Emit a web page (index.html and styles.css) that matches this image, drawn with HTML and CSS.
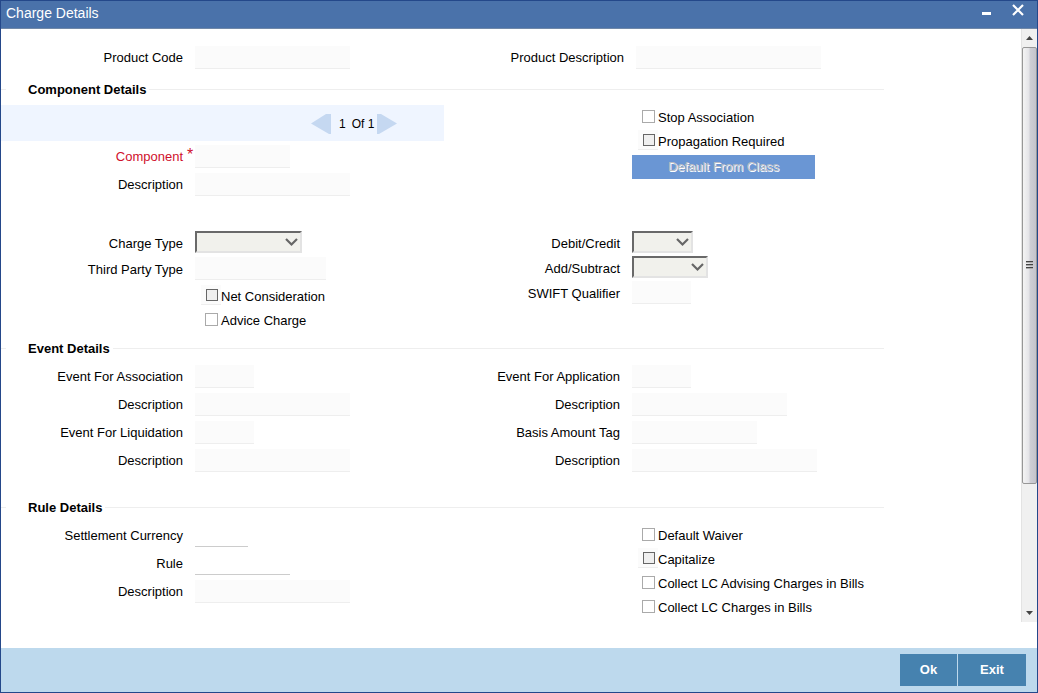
FILE: index.html
```
<!DOCTYPE html>
<html lang="en">
<head>
    <meta charset="UTF-8">
    <meta name="viewport" content="width=device-width, initial-scale=1.0">
    <title>Charge Details</title>
    <link rel="stylesheet" href="styles.css">
</head>
<body>
    <div class="window">
        <header class="titlebar">
            <h1>Charge Details</h1>
            <div class="window-controls">
                <button type="button" aria-label="Minimize">
                    <svg width="12" height="12" viewBox="0 0 12 12"><path d="M1 8h9v3H1z" fill="#fff"/></svg>
                </button>
                <button type="button" aria-label="Close">
                    <svg width="12" height="12" viewBox="0 0 12 12"><path d="M1 1l10 10M11 1L1 11" stroke="#fff" stroke-width="2.2"/></svg>
                </button>
            </div>
        </header>

        <main class="content">
            <form class="form" id="chargeForm">
                <div class="columns product">
                    <div class="column">
                        <div class="row"><label for="productCode">Product Code</label><input type="text" id="productCode" class="w-lg" disabled></div>
                    </div>
                    <div class="column">
                        <div class="row"><label for="productDesc">Product Description</label><input type="text" id="productDesc" class="w-xl" disabled></div>
                    </div>
                </div>

                <section>
                    <h2>Component Details</h2>
                    <div class="columns">
                        <div class="column">
                            <div class="record-nav">
                                <button type="button" aria-label="Previous">
                                    <svg width="20" height="20" viewBox="0 0 20 20"><path d="M0 9.500L15 0h5v20h-2z" fill="#c5d8f1"/></svg>
                                </button>
                                <span class="record-count"><span>1</span><span>Of 1</span></span>
                                <button type="button" aria-label="Next">
                                    <svg width="20" height="20" viewBox="0 0 20 20"><path d="M20 9.500L4 0H0v20h2z" fill="#c5d8f1"/></svg>
                                </button>
                            </div>
                            <div class="fields">
                                <div class="row required"><label for="component">Component <b>*</b></label><input type="text" id="component" class="w-md" disabled></div>
                                <div class="row"><label for="componentDesc">Description</label><input type="text" id="componentDesc" class="w-lg" disabled></div>
                            </div>
                        </div>
                        <div class="column">
                            <div class="check"><span class="tick"><input type="checkbox" id="stopAssoc"></span><label for="stopAssoc">Stop Association</label></div>
                            <div class="check"><span class="tick off"><input type="checkbox" id="propagation" disabled></span><label for="propagation">Propagation Required</label></div>
                            <button type="button" class="default-btn" disabled>Default From Class</button>
                        </div>
                    </div>
                    <div class="columns charge">
                        <div class="column">
                            <div class="row"><label for="chargeType">Charge Type</label><span class="select w-type"><select id="chargeType" disabled><option></option></select><svg width="13" height="9" viewBox="0 0 13 9"><path d="M1 1l5.500 5.500L12 1" fill="none" stroke="#666" stroke-width="2.200"/></svg></span></div>
                            <div class="row"><label for="thirdParty">Third Party Type</label><input type="text" id="thirdParty" class="w-third" disabled></div>
                            <div>
                                <div class="check"><span class="tick off"><input type="checkbox" id="netCons" disabled></span><label for="netCons">Net Consideration</label></div>
                                <div class="check"><span class="tick"><input type="checkbox" id="advice"></span><label for="advice">Advice Charge</label></div>
                            </div>
                        </div>
                        <div class="column">
                            <div class="row"><label for="debitCredit">Debit/Credit</label><span class="select w-debit"><select id="debitCredit" disabled><option></option></select><svg width="13" height="9" viewBox="0 0 13 9"><path d="M1 1l5.500 5.500L12 1" fill="none" stroke="#666" stroke-width="2.200"/></svg></span></div>
                            <div class="row"><label for="addSubtract">Add/Subtract</label><span class="select w-add"><select id="addSubtract" disabled><option></option></select><svg width="13" height="9" viewBox="0 0 13 9"><path d="M1 1l5.500 5.500L12 1" fill="none" stroke="#666" stroke-width="2.200"/></svg></span></div>
                            <div class="row"><label for="swift">SWIFT Qualifier</label><input type="text" id="swift" class="w-sm" disabled></div>
                        </div>
                    </div>
                </section>

                <section class="event">
                    <h2>Event Details</h2>
                    <div class="columns">
                        <div class="column fields">
                            <div class="row"><label for="eventAssoc">Event For Association</label><input type="text" id="eventAssoc" class="w-sm" disabled></div>
                            <div class="row"><label for="eventAssocDesc">Description</label><input type="text" id="eventAssocDesc" class="w-lg" disabled></div>
                            <div class="row"><label for="eventLiq">Event For Liquidation</label><input type="text" id="eventLiq" class="w-sm" disabled></div>
                            <div class="row"><label for="eventLiqDesc">Description</label><input type="text" id="eventLiqDesc" class="w-lg" disabled></div>
                        </div>
                        <div class="column fields">
                            <div class="row"><label for="eventApp">Event For Application</label><input type="text" id="eventApp" class="w-sm" disabled></div>
                            <div class="row"><label for="eventAppDesc">Description</label><input type="text" id="eventAppDesc" class="w-lg" disabled></div>
                            <div class="row"><label for="basisTag">Basis Amount Tag</label><input type="text" id="basisTag" class="w-basis" disabled></div>
                            <div class="row"><label for="basisDesc">Description</label><input type="text" id="basisDesc" class="w-xl" disabled></div>
                        </div>
                    </div>
                </section>

                <section class="rule">
                    <h2>Rule Details</h2>
                    <div class="columns">
                        <div class="column fields">
                            <div class="row"><label for="currency">Settlement Currency</label><input type="text" id="currency" class="w-xs"></div>
                            <div class="row"><label for="rule">Rule</label><input type="text" id="rule" class="w-md"></div>
                            <div class="row"><label for="ruleDesc">Description</label><input type="text" id="ruleDesc" class="w-lg" disabled></div>
                        </div>
                        <div class="column">
                            <div class="check"><span class="tick"><input type="checkbox" id="waiver"></span><label for="waiver">Default Waiver</label></div>
                            <div class="check"><span class="tick off"><input type="checkbox" id="capitalize" disabled></span><label for="capitalize">Capitalize</label></div>
                            <div class="check"><span class="tick"><input type="checkbox" id="lcAdvising"></span><label for="lcAdvising">Collect LC Advising Charges in Bills</label></div>
                            <div class="check"><span class="tick"><input type="checkbox" id="lcCharges"></span><label for="lcCharges">Collect LC Charges in Bills</label></div>
                        </div>
                    </div>
                </section>
            </form>

            <div class="scrollbar">
                <button type="button" aria-label="Scroll up">
                    <svg width="7" height="4" viewBox="0 0 7 4"><path d="M0 4L3.500 0 7 4z" fill="#444"/></svg>
                </button>
                <div class="track">
                    <div class="thumb"><i></i><i></i><i></i></div>
                </div>
                <button type="button" aria-label="Scroll down">
                    <svg width="7" height="4" viewBox="0 0 7 4"><path d="M0 0h7L3.500 4z" fill="#444"/></svg>
                </button>
            </div>
        </main>

        <footer class="footer">
            <button type="submit" form="chargeForm" class="ok">Ok</button>
            <button type="button" class="exit">Exit</button>
        </footer>
    </div>
</body>
</html>
```
FILE: styles.css
```
* {
    box-sizing: border-box;
}
body {
    margin: 0;
    font-family: "Liberation Sans", Arial, sans-serif;
    font-size: 13px;
    line-height: 16px;
    color: #000;
    background: #fff;
}
button, input, select {
    font: inherit;
    margin: 0;
    padding: 0;
    border: none;
    border-radius: 0;
    background: none;
}
svg {
    display: block;
}
.window {
    display: flex;
    flex-direction: column;
    min-height: 100vh;
    border: 1px solid #24488a;
}

/* Title bar */
.titlebar {
    display: flex;
    justify-content: space-between;
    height: 28px;
    padding: 0 13px 0 5px;
    background: #4a72aa;
    border-bottom: 1px solid #7088a8;
}
.titlebar h1 {
    margin: 0;
    font-size: 14px;
    font-weight: normal;
    line-height: 24px;
    color: #fff;
}
.window-controls {
    display: flex;
    align-items: flex-start;
    gap: 19px;
    padding-top: 3px;
}

/* Form */
.content {
    display: flex;
    flex: 1;
    padding-bottom: 26px;
}
.form {
    flex: 1;
    padding: 17px 137px 0 0;
}
.columns {
    display: grid;
    grid-template-columns: 443px 1fr;
}
.row {
    display: flex;
    align-items: flex-start;
}
.row label {
    width: 182px;
    margin-right: 12px;
    padding-top: 4px;
    text-align: right;
    white-space: nowrap;
}
.column + .column .row label {
    width: 176px;
}
.product .column + .column .row label {
    width: 180px;
}
.row input {
    height: 23px;
    border-bottom: 1px solid #ccc;
}
.row input:disabled {
    background: #fbfbfb;
    border-bottom-color: #eee;
}
.fields {
    padding-top: 1px;
}
.fields .row + .row {
    margin-top: 5px;
}
.record-nav + .fields {
    padding-top: 4px;
}
.required label {
    position: relative;
    color: #d0102c;
}
.required b {
    position: absolute;
    left: 100%;
    top: 0;
    padding: 2px 0 0 4px;
    font-size: 16px;
    font-weight: normal;
}
.w-xs { width: 53px; }
.w-sm { width: 59px; }
.w-md { width: 95px; }
.w-basis { width: 125px; }
.w-third { width: 131px; }
.w-lg { width: 155px; }
.w-xl { width: 185px; }
.w-debit { width: 61px; }
.w-add { width: 76px; }
.w-type { width: 107px; }

/* Section headings with a rule through them */
section {
    margin-top: 12px;
}
section.event {
    margin-top: 8px;
}
section.rule {
    margin-top: 27px;
}
section h2 {
    display: flex;
    align-items: center;
    margin: 0 0 7px;
    font-size: 13px;
    line-height: 17px;
}
section h2::before {
    content: "";
    width: 5px;
    height: 1px;
    margin-right: 22px;
    background: #eee;
}
section h2::after {
    content: "";
    flex: 1;
    height: 1px;
    margin-left: 3px;
    background: #eee;
}

/* Record navigation */
.record-nav {
    display: flex;
    align-items: center;
    height: 36px;
    padding: 2px 0 0 310px;
    background: #eff5ff;
}
.record-count {
    display: flex;
    gap: 6px;
    padding: 0 3px 0 8px;
    font-size: 12px;
}

/* Check boxes */
.check {
    display: flex;
    height: 24px;
    padding-left: 200px;
}
.column + .column .check {
    padding-left: 194px;
}
.check label {
    line-height: 26px;
}
.tick {
    width: 20px;
    height: 20px;
    margin-top: 1px;
    padding: 4px;
}
.tick input {
    display: block;
    appearance: none;
    width: 13px;
    height: 13px;
    border: 1px solid #aaa;
    background: #fff;
}
.tick input:checked {
    background: #4a72aa;
}
.tick.off {
    background: #fbfbfb;
    border-bottom: 1px solid #eee;
    padding-left: 5px;
}
.tick.off input {
    width: 12px;
    height: 12px;
    border-color: #666;
    background: #efefef;
}
.default-btn {
    width: 183px;
    height: 24px;
    margin: 2px 0 0 188px;
    background: #6a96d4;
    color: #b8bcc4;
    text-shadow: 1px 1px 0 #fff;
}

/* Drop-downs */
.charge {
    margin-top: 35px;
}
.charge .column {
    display: flex;
    flex-direction: column;
    gap: 4px;
}
.charge .column + .column {
    gap: 3px;
}
.charge .row label {
    padding-top: 5px;
}
.select {
    position: relative;
    height: 22px;
}
.select select {
    display: block;
    appearance: none;
    width: 100%;
    height: 22px;
    background: #f1f1ec;
    border: 2px solid #e3e3e3;
    border-top-color: #696969;
    border-left-color: #696969;
    opacity: 1;
}
.select svg {
    position: absolute;
    right: 4px;
    top: 7px;
    pointer-events: none;
}

/* Scroll bar */
.scrollbar {
    display: flex;
    flex-direction: column;
    width: 16px;
    background: #f0f0f0;
    border-left: 1px solid #e3e3e3;
}
.scrollbar button {
    display: flex;
    align-items: center;
    justify-content: center;
    height: 18px;
}
.track {
    flex: 1;
}
.thumb {
    display: flex;
    flex-direction: column;
    align-items: center;
    justify-content: center;
    gap: 1px;
    height: 78.4%;
    border: 1px solid #979797;
    border-radius: 2px;
    background: linear-gradient(to right, #f4f4f4, #e4e4e8 45%, #cfcfd5 55%, #c4c4cc);
}
.thumb i {
    width: 7px;
    height: 2px;
    border-top: 1px solid #444;
    border-bottom: 1px solid #aaa;
}

/* Footer */
.footer {
    display: flex;
    justify-content: flex-end;
    gap: 1px;
    padding: 6px 11px;
    background: #bdd9ed;
}
.footer button {
    width: 57px;
    height: 32px;
    background: #4682af;
    color: #fff;
    font-size: 13px;
    font-weight: bold;
}
.footer .exit {
    width: 68px;
}
```
